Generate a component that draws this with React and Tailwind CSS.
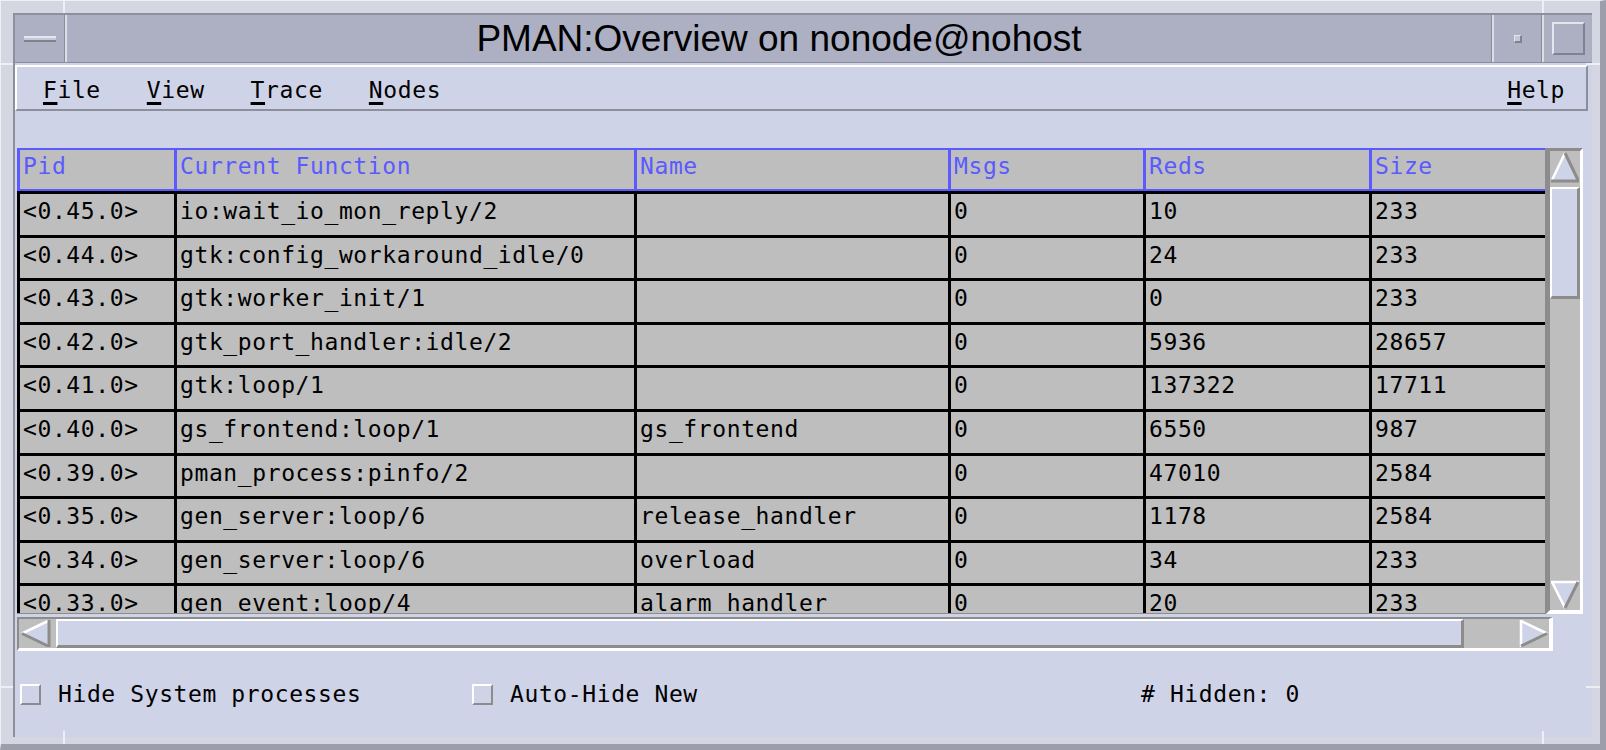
import React from 'react';

const rows = [
  ['<0.45.0>', 'io:wait_io_mon_reply/2', '', '0', '10', '233'],
  ['<0.44.0>', 'gtk:config_workaround_idle/0', '', '0', '24', '233'],
  ['<0.43.0>', 'gtk:worker_init/1', '', '0', '0', '233'],
  ['<0.42.0>', 'gtk_port_handler:idle/2', '', '0', '5936', '28657'],
  ['<0.41.0>', 'gtk:loop/1', '', '0', '137322', '17711'],
  ['<0.40.0>', 'gs_frontend:loop/1', 'gs_frontend', '0', '6550', '987'],
  ['<0.39.0>', 'pman_process:pinfo/2', '', '0', '47010', '2584'],
  ['<0.35.0>', 'gen_server:loop/6', 'release_handler', '0', '1178', '2584'],
  ['<0.34.0>', 'gen_server:loop/6', 'overload', '0', '34', '233'],
  ['<0.33.0>', 'gen_event:loop/4', 'alarm_handler', '0', '20', '233'],
];

const headers = ['Pid', 'Current Function', 'Name', 'Msgs', 'Reds', 'Size'];

const mono = "font-['DejaVu_Sans_Mono',monospace] text-[23px] tracking-[0.6px]";
const LAV = '#cfd3e7';
const SHADOW = '#8c8c8c';

function ArrowUp() {
  return (
    <svg width="30" height="32" viewBox="0 0 30 32">
      <polygon points="15,2 28,29 2,29" fill={LAV} />
      <line x1="2" y1="29" x2="15" y2="2" stroke="#fff" strokeWidth="2.5" />
      <line x1="15" y1="2" x2="28" y2="29" stroke={SHADOW} strokeWidth="3" />
      <line x1="1" y1="30" x2="29" y2="30" stroke={SHADOW} strokeWidth="3" />
    </svg>
  );
}

function ArrowDown() {
  return (
    <svg width="30" height="30" viewBox="0 0 30 30">
      <polygon points="2,2 28,2 15,28" fill={LAV} />
      <line x1="1" y1="2" x2="29" y2="2" stroke="#fff" strokeWidth="2.5" />
      <line x1="2" y1="2" x2="15" y2="28" stroke="#fff" strokeWidth="2.5" />
      <line x1="28" y1="2" x2="15" y2="28" stroke={SHADOW} strokeWidth="3" />
    </svg>
  );
}

function ArrowLeft() {
  return (
    <svg width="32" height="29" viewBox="0 0 32 29">
      <polygon points="3,14.5 29,2 29,27" fill={LAV} />
      <line x1="3" y1="14.5" x2="29" y2="2" stroke="#fff" strokeWidth="2.5" />
      <line x1="3" y1="14.5" x2="29" y2="27" stroke={SHADOW} strokeWidth="3" />
      <line x1="30" y1="1" x2="30" y2="28" stroke={SHADOW} strokeWidth="3" />
    </svg>
  );
}

function ArrowRight() {
  return (
    <svg width="30" height="29" viewBox="0 0 30 29">
      <polygon points="2,2 2,27 28,14.5" fill={LAV} />
      <line x1="2" y1="1" x2="2" y2="28" stroke="#fff" strokeWidth="2.5" />
      <line x1="2" y1="2" x2="28" y2="14.5" stroke="#fff" strokeWidth="2.5" />
      <line x1="2" y1="27" x2="28" y2="14.5" stroke={SHADOW} strokeWidth="3" />
    </svg>
  );
}

function MenuItem({ label }) {
  return (
    <span>
      <span className="underline decoration-[3px] underline-offset-[4px]">{label[0]}</span>
      {label.slice(1)}
    </span>
  );
}

function Checkbox() {
  return (
    <div className="w-[21px] h-[21px] border-2 border-t-white border-l-white border-r-[#8c8c8c] border-b-[#8c8c8c] bg-[#cfd3e7]" />
  );
}

export default function App() {
  return (
    <div className="relative w-[1606px] h-[750px] bg-[#d4d6e1] pt-[12px] pl-[12px] pr-[8px] pb-[7px] border-t border-l border-t-[#eeeff4] border-l-[#eeeff4] border-r-[6px] border-b-[6px] border-r-[#9c9eac] border-b-[#9c9eac] text-black">
      {/* frame resize marks */}
      <span className="absolute left-[62px] top-0 w-[2px] h-[12px] bg-[#eeeff4]" />
      <span className="absolute left-[1541px] top-0 w-[2px] h-[12px] bg-[#eeeff4]" />
      <span className="absolute left-0 top-[62px] w-[12px] h-[2px] bg-[#eeeff4]" />
      <span className="absolute left-0 top-[685px] w-[12px] h-[2px] bg-[#eeeff4]" />
      <span className="absolute right-0 top-[62px] w-[14px] h-[2px] bg-[#eeeff4]" />
      <span className="absolute right-0 top-[685px] w-[14px] h-[2px] bg-[#eeeff4]" />
      <span className="absolute left-[62px] bottom-0 w-[2px] h-[13px] bg-[#eeeff4]" />
      <span className="absolute left-[1541px] bottom-0 w-[2px] h-[13px] bg-[#eeeff4]" />

      <div className="w-full h-full flex flex-col border-l-2 border-t-2 border-[#8d8f9d] bg-[#cfd3e7]">
        {/* title bar */}
        <div className="h-[48px] flex bg-[#adafc2] border-b border-b-[#8a8c9a]">
          <div className="w-[50px] flex items-center justify-center border-r border-r-[#8a8c9a]">
            <div className="w-[32px] h-[6px] bg-[#c6c8d6] border-t-2 border-t-[#e4e5ee] border-b-2 border-b-[#80828f]" />
          </div>
          <div className="flex-1 flex items-center justify-center border-l-2 border-l-[#dcdde6] border-r border-r-[#8a8c9a] font-['Liberation_Sans',Arial,sans-serif] text-[37px] leading-none">
            PMAN:Overview on nonode@nohost
          </div>
          <div className="w-[50px] flex items-center justify-center border-l-2 border-l-[#dcdde6] border-r border-r-[#8a8c9a]">
            <div className="w-[8px] h-[8px] bg-[#c6c8d6] border-t border-l border-[#e4e5ee] border-r-2 border-b-2 border-r-[#80828f] border-b-[#80828f]" />
          </div>
          <div className="w-[50px] flex items-center justify-center border-l-2 border-l-[#dcdde6]">
            <div className="w-[33px] h-[33px] border-t-2 border-l-2 border-[#e4e5ee] border-r-2 border-b-2 border-r-[#80828f] border-b-[#80828f]" />
          </div>
        </div>

        {/* menu bar */}
        <div className={`mt-[2px] mr-[4px] h-[46px] flex items-center pt-[5px] pl-[26px] pr-[21px] gap-[46px] border-2 border-t-white border-l-white border-r-[#8c8e9c] border-b-[#8c8e9c] ${mono}`}>
          <MenuItem label="File" />
          <MenuItem label="View" />
          <MenuItem label="Trace" />
          <MenuItem label="Nodes" />
          <span className="ml-auto"><MenuItem label="Help" /></span>
        </div>

        {/* content */}
        <div className="flex-1 flex flex-col pl-[2px] pt-[37px]">
          <div className="flex h-[466px]">
            <div className={`w-[1529px] h-full overflow-hidden bg-[#bebebe] border-r border-b border-[#8c8c8c] ${mono}`}>
              <div className="grid grid-cols-[157px_460px_314px_195px_226px_176px]">
                {headers.map((h) => (
                  <div key={h} className="h-[43px] flex items-center pl-[3px] pb-[6px] border-l-[3px] border-y-2 border-[#5a5aff] text-[#5a5aff] whitespace-nowrap">
                    {h}
                  </div>
                ))}
                {rows.map((r, i) =>
                  r.map((c, j) => (
                    <div key={i + '-' + j} className="h-[43.6px] flex items-center pl-[3px] pb-[6px] border-l-[3px] border-t-[3px] border-black whitespace-nowrap overflow-hidden">
                      {c}
                    </div>
                  ))
                )}
              </div>
            </div>
            {/* vertical scrollbar */}
            <div className="w-[37px] h-full flex flex-col bg-[#bebebe] border-t-[3px] border-l-[4px] border-r-[3px] border-b-[4px] border-t-[#8c8c8c] border-l-[#8c8c8c] border-r-white border-b-white">
              <ArrowUp />
              <div className="mt-[4px] h-[112px] bg-[#cfd3e7] border-t-2 border-l-2 border-t-white border-l-white border-r-[3px] border-b-[3px] border-r-[#8c8c8c] border-b-[#8c8c8c]" />
              <div className="flex-1" />
              <ArrowDown />
            </div>
          </div>

          {/* horizontal scrollbar */}
          <div className="mt-[3px] w-[1536px] h-[34px] flex bg-[#bebebe] border-t-2 border-l-2 border-r-[4px] border-b-[3px] border-t-[#8c8c8c] border-l-[#8c8c8c] border-r-white border-b-white">
            <ArrowLeft />
            <div className="ml-[5px] w-[1408px] h-full bg-[#cfd3e7] border-t-2 border-l-2 border-t-white border-l-white border-r-[3px] border-b-[3px] border-r-[#8c8c8c] border-b-[#8c8c8c]" />
            <div className="w-[55px]" />
            <ArrowRight />
          </div>

          {/* bottom controls */}
          <div className={`flex-1 flex items-center pl-[3px] ${mono}`}>
            <div className="w-[452px] flex items-center">
              <Checkbox />
              <span className="ml-[17px]">Hide System processes</span>
            </div>
            <div className="w-[669px] flex items-center">
              <Checkbox />
              <span className="ml-[17px]">Auto-Hide New</span>
            </div>
            <span># Hidden: 0</span>
          </div>
        </div>
      </div>
    </div>
  );
}
